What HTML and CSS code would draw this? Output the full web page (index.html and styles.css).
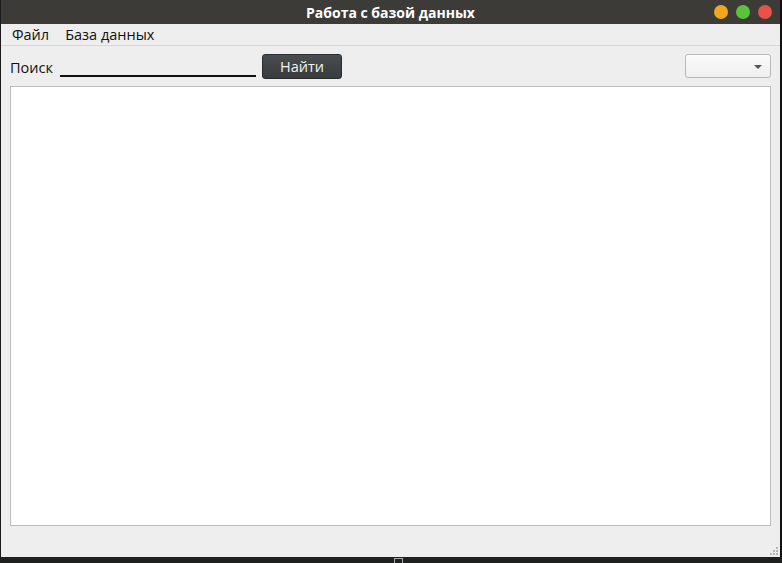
FILE: index.html
```html
<!DOCTYPE html>
<html lang="ru">
<head>
<meta charset="utf-8">
<title>Работа с базой данных</title>
<link rel="stylesheet" href="styles.css">
</head>
<body>
<div class="desktop">
  <div class="window">
    <div class="titlebar">
      <span class="title">Работа с базой данных</span>
      <div class="controls">
        <span class="dot dot-min"></span>
        <span class="dot dot-max"></span>
        <span class="dot dot-close"></span>
      </div>
    </div>
    <div class="menubar">
      <span class="menu-item">Файл</span>
      <span class="menu-item">База данных</span>
    </div>
    <div class="toolbar">
      <span class="label">Поиск</span>
      <span class="search-input"></span>
      <button class="btn">Найти</button>
      <span class="spacer"></span>
      <span class="combo"><span class="arrow"></span></span>
    </div>
    <div class="table"></div>
    <div class="statusbar">
      <span class="grip">
        <i></i><i></i><i></i><i></i><i></i><i></i>
      </span>
    </div>
  </div>
  <div class="right-strip"></div>
</div>
<div class="bottom-strip"><span class="tray-box"></span></div>
</body>
</html>
```

FILE: styles.css
```css
html, body {
  margin: 0;
  padding: 0;
  background: #1d1f1f;
  width: 782px;
  height: 563px;
  overflow: hidden;
  font-family: "Open Sans", "Noto Sans", "DejaVu Sans", sans-serif;
}

.desktop {
  display: flex;
  height: 557px;
}

.window {
  width: 779px;
  height: 557px;
  border-left: 1px solid #1a1a1a;
  background: #eeeeee;
  display: flex;
  flex-direction: column;
}

.right-strip {
  width: 2px;
  background: #111111;
}

.titlebar {
  height: 24px;
  background: #3c3b38;
  position: relative;
  display: flex;
  align-items: center;
  justify-content: center;
}

.title {
  color: #ffffff;
  font-weight: bold;
  font-size: 14px;
  margin-left: 0;
}

.controls {
  position: absolute;
  right: 8px;
  top: 5px;
  display: flex;
  gap: 8px;
}

.dot {
  width: 14px;
  height: 14px;
  border-radius: 50%;
  display: block;
}
.dot-min { background: #f2a71e; }
.dot-max { background: #59c43b; }
.dot-close { background: #e8524a; }

.menubar {
  height: 21px;
  border-bottom: 1px solid #d6d6d6;
  display: flex;
  align-items: center;
  padding-left: 11px;
  gap: 16px;
  font-size: 14.5px;
  color: #111111;
}

.toolbar {
  height: 40px;
  display: flex;
  align-items: center;
  padding: 0 9px;
  font-size: 14.5px;
  color: #111;
}

.label {
  width: 50px;
  margin-top: 2px;
}

.search-input {
  width: 196px;
  height: 22px;
  border-bottom: 2px solid #111111;
  box-sizing: border-box;
}

.btn {
  margin-left: 6px;
  width: 80px;
  height: 25px;
  box-sizing: border-box;
  border: 1px solid #2a2c2d;
  border-radius: 3px;
  background: linear-gradient(#4a4d4f, #393c3e);
  color: #f2f2f2;
  font-family: "Open Sans", "Noto Sans", sans-serif;
  font-size: 14.5px;
  padding: 0;
  margin-top: 1px;
}

.spacer { flex: 1; }

.combo {
  width: 86px;
  height: 24px;
  box-sizing: border-box;
  border: 1px solid #b9b9b9;
  border-radius: 3px;
  background: linear-gradient(#fbfbfb, #efefef);
  position: relative;
}

.arrow {
  position: absolute;
  right: 8px;
  top: 10px;
  width: 0;
  height: 0;
  border-left: 4px solid transparent;
  border-right: 4px solid transparent;
  border-top: 4px solid #555555;
}

.table {
  margin: 0 9px 0 9px;
  height: 440px;
  box-sizing: border-box;
  border: 1px solid #bdbdbd;
  background: #ffffff;
}

.statusbar {
  flex: 1;
  position: relative;
}

.grip {
  position: absolute;
  right: 2px;
  bottom: 2px;
  width: 10px;
  height: 10px;
}
.grip i {
  position: absolute;
  width: 2px;
  height: 2px;
  background: #b8b8b8;
}
.grip i:nth-child(1) { right: 0; bottom: 0; }
.grip i:nth-child(2) { right: 3px; bottom: 0; }
.grip i:nth-child(3) { right: 6px; bottom: 0; }
.grip i:nth-child(4) { right: 0; bottom: 3px; }
.grip i:nth-child(5) { right: 3px; bottom: 3px; }
.grip i:nth-child(6) { right: 0; bottom: 6px; }

.bottom-strip {
  height: 6px;
  background: #1e2020;
  position: relative;
}

.tray-box {
  position: absolute;
  left: 394px;
  top: 1px;
  width: 7px;
  height: 6px;
  border: 1px solid #aaaaaa;
  border-bottom: none;
}
```
